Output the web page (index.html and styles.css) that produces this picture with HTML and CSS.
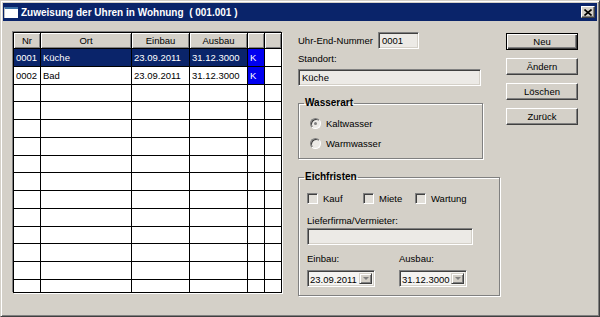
FILE: index.html
```html
<!DOCTYPE html>
<html>
<head>
    <meta charset="utf-8">
    <title>Zuweisung der Uhren in Wohnung</title>
    <link rel="stylesheet" href="styles.css">
</head>
<body>
    <div class="window">
        <div class="titlebar">
            <span class="app-icon"></span>
            <span class="title">Zuweisung der Uhren in Wohnung&nbsp; ( 001.001 )</span>
            <span class="close-btn">
                <svg width="8" height="7" viewBox="0 0 8 7"><path d="M0.5 0.5 L7.5 6.5 M7.5 0.5 L0.5 6.5" stroke="#000" stroke-width="1.6"/></svg>
            </span>
        </div>

        <div class="dialog">
            <!-- Uhren list -->
            <div class="grid-frame">
                <table class="grid">
                    <thead>
                        <tr>
                            <th class="c-nr">Nr</th>
                            <th class="c-ort">Ort</th>
                            <th class="c-date">Einbau</th>
                            <th class="c-date">Ausbau</th>
                            <th class="c-flag"></th>
                            <th class="c-end"></th>
                        </tr>
                    </thead>
                    <tbody>
                        <tr class="selected">
                            <td>0001</td><td>Küche</td><td>23.09.2011</td><td>31.12.3000</td><td class="flag">K</td><td class="blank"></td>
                        </tr>
                        <tr>
                            <td>0002</td><td>Bad</td><td>23.09.2011</td><td>31.12.3000</td><td class="flag">K</td><td class="blank"></td>
                        </tr>
                        <tr><td></td><td></td><td></td><td></td><td></td><td></td></tr>
                        <tr><td></td><td></td><td></td><td></td><td></td><td></td></tr>
                        <tr><td></td><td></td><td></td><td></td><td></td><td></td></tr>
                        <tr><td></td><td></td><td></td><td></td><td></td><td></td></tr>
                        <tr><td></td><td></td><td></td><td></td><td></td><td></td></tr>
                        <tr><td></td><td></td><td></td><td></td><td></td><td></td></tr>
                        <tr><td></td><td></td><td></td><td></td><td></td><td></td></tr>
                        <tr><td></td><td></td><td></td><td></td><td></td><td></td></tr>
                        <tr><td></td><td></td><td></td><td></td><td></td><td></td></tr>
                        <tr><td></td><td></td><td></td><td></td><td></td><td></td></tr>
                        <tr><td></td><td></td><td></td><td></td><td></td><td></td></tr>
                        <tr><td></td><td></td><td></td><td></td><td></td><td></td></tr>
                    </tbody>
                </table>
            </div>

            <!-- Details -->
            <div class="form">
                <div class="field-row">
                    <span class="label-wide">Uhr-End-Nummer</span>
                    <div class="edit edit-nr">0001</div>
                </div>
                <div class="label standort-label">Standort:</div>
                <div class="edit edit-standort">Küche</div>

                <fieldset class="group group-wasser">
                    <legend>Wasserart</legend>
                    <div class="option">
                        <span class="radio checked"></span>
                        <span>Kaltwasser</span>
                    </div>
                    <div class="option">
                        <span class="radio"></span>
                        <span>Warmwasser</span>
                    </div>
                </fieldset>

                <fieldset class="group group-eich">
                    <legend>Eichfristen</legend>
                    <div class="checks">
                        <div class="option check-kauf"><span class="checkbox"></span><span>Kauf</span></div>
                        <div class="option check-miete"><span class="checkbox"></span><span>Miete</span></div>
                        <div class="option"><span class="checkbox"></span><span>Wartung</span></div>
                    </div>
                    <div class="label liefer-label">Lieferfirma/Vermieter:</div>
                    <div class="edit edit-liefer"></div>
                    <div class="dates">
                        <div class="date-col">
                            <div class="label">Einbau:</div>
                            <div class="combo"><span class="combo-text">23.09.2011</span><span class="combo-btn"><span class="arrow"></span></span></div>
                        </div>
                        <div class="date-col">
                            <div class="label">Ausbau:</div>
                            <div class="combo"><span class="combo-text">31.12.3000</span><span class="combo-btn"><span class="arrow"></span></span></div>
                        </div>
                    </div>
                </fieldset>
            </div>

            <!-- Actions -->
            <div class="actions">
                <button class="btn default">Neu</button>
                <button class="btn">Ändern</button>
                <button class="btn">Löschen</button>
                <button class="btn">Zurück</button>
            </div>
        </div>
    </div>
</body>
</html>
```

FILE: styles.css
```css
body {
    margin: 0;
    background-color: #d4d0c8;
    font-family: "Liberation Sans", Arial, sans-serif;
    font-size: 9.5px;
    color: #000;
}
.window {
    width: 600px;
    height: 317px;
    box-sizing: border-box;
    border: 1px solid;
    border-color: #d4d0c8 #404040 #404040 #d4d0c8;
    box-shadow: inset 1px 1px #fff, inset -1px -1px #808080;
    padding: 2px;
    background-color: #d4d0c8;
}
.titlebar {
    height: 18px;
    background-color: #0a246a;
    display: flex;
    align-items: center;
    padding: 0 2px 0 1px;
    color: #fff;
}
.app-icon {
    width: 14px;
    height: 11px;
    box-sizing: border-box;
    background-color: #fff;
    border-top: 2px solid #3a6ea5;
    border-left: 1px solid #c0c0c0;
}
.title {
    margin-left: 3px;
    font-weight: bold;
    font-size: 10px;
    flex: 1;
    white-space: pre;
}
.close-btn {
    width: 14px;
    height: 12px;
    box-sizing: border-box;
    background-color: #d4d0c8;
    border: 1px solid;
    border-color: #fff #404040 #404040 #fff;
    box-shadow: inset -1px -1px #808080;
    display: flex;
    align-items: center;
    justify-content: center;
}
.dialog {
    display: flex;
    align-items: flex-start;
    padding: 11px 0 0 10px;
}

/* list */
.grid-frame {
    width: 269px;
    height: 261px;
    box-sizing: border-box;
    border: 1px solid #000;
    box-shadow: -1px -1px 0 #808080, 1px 1px 0 #fff;
    overflow: hidden;
    background-color: #fff;
}
.grid {
    border-collapse: separate;
    border-spacing: 0;
    table-layout: fixed;
    width: 267px;
}
.grid th,
.grid td {
    box-sizing: border-box;
    border-right: 1px solid #000;
    border-bottom: 1px solid #000;
    padding: 0 2px;
    white-space: nowrap;
    overflow: hidden;
    font-weight: normal;
}
.grid th:last-child,
.grid td:last-child {
    border-right: 0;
}
.grid th {
    height: 16px;
    background-color: #d4d0c8;
    box-shadow: inset 1px 1px #fff, inset -1px -1px #808080;
    text-align: center;
}
.grid td {
    height: 17.77px;
}
.c-nr { width: 27px; }
.c-ort { width: 91px; }
.c-date { width: 58px; }
.c-flag { width: 17px; }
.c-end { width: 16px; }
.grid tr.selected td {
    background-color: #0a246a;
    color: #fff;
}
.grid td.flag,
.grid tr.selected td.flag {
    background-color: #0000f0;
    color: #fff;
}
.grid tr.selected td.blank {
    background-color: #fff;
}

/* details */
.form {
    width: 186px;
    margin-left: 16px;
    display: flex;
    flex-direction: column;
}
.field-row {
    display: flex;
    align-items: center;
    height: 17px;
}
.label-wide {
    width: 80px;
}
.label {
    height: 12px;
    line-height: 12px;
}
.standort-label {
    margin-top: 4px;
}
.edit {
    height: 17px;
    box-sizing: border-box;
    border: 1px solid;
    border-color: #808080 #fff #fff #808080;
    box-shadow: inset 1px 1px #404040, inset -1px -1px #d4d0c8;
    background-color: #eceae6;
    padding: 0 3px;
    line-height: 15px;
}
.edit-nr {
    width: 41px;
}
.edit-standort {
    width: 183px;
    margin-top: 4px;
}
.group {
    margin: 0;
    border: 1px solid #808080;
    box-shadow: 1px 1px #fff, inset 1px 1px #fff;
}
.group legend {
    font-weight: bold;
    font-size: 10px;
    padding: 0 1px;
    line-height: 12px;
}
.group-wasser {
    margin-top: 11px;
    width: 185px;
    box-sizing: border-box;
    padding: 7px 11px 8px;
}
.group-wasser legend {
    margin-left: -6px;
}
.group-wasser .option + .option {
    margin-top: 6px;
}
.group-eich {
    margin-top: 12px;
    width: 186px;
    box-sizing: border-box;
    padding: 8px 8px 8px;
}
.group-eich legend {
    margin-left: -3px;
}
.option {
    display: flex;
    align-items: center;
    height: 14px;
}
.radio {
    width: 11px;
    height: 11px;
    box-sizing: border-box;
    border-radius: 50%;
    border: 1px solid;
    border-color: #808080 #fff #fff #808080;
    box-shadow: inset 1px 1px #404040;
    background-color: #eceae6;
    margin-right: 5px;
    display: flex;
    align-items: center;
    justify-content: center;
}
.radio.checked::after {
    content: "";
    width: 3px;
    height: 3px;
    border-radius: 50%;
    background-color: #808080;
}
.checks {
    display: flex;
}
.check-kauf {
    width: 56px;
}
.check-miete {
    width: 52px;
}
.checkbox {
    width: 11px;
    height: 11px;
    box-sizing: border-box;
    border: 1px solid;
    border-color: #808080 #fff #fff #808080;
    box-shadow: inset 1px 1px #404040;
    background-color: #e2dfd9;
    margin-right: 5px;
}
.liefer-label {
    margin-top: 10px;
}
.edit-liefer {
    width: 166px;
    margin-top: 1px;
}
.dates {
    display: flex;
    margin-top: 8px;
}
.date-col {
    width: 92px;
}
.combo {
    margin-top: 5px;
    width: 68px;
    height: 17px;
    box-sizing: border-box;
    border: 1px solid;
    border-color: #808080 #fff #fff #808080;
    box-shadow: inset 1px 1px #404040, inset -1px -1px #d4d0c8;
    background-color: #f4f3f1;
    display: flex;
    padding: 2px;
}
.combo-text {
    flex: 1;
    line-height: 13px;
}
.combo-btn {
    width: 13px;
    box-sizing: border-box;
    background-color: #d4d0c8;
    border: 1px solid;
    border-color: #d4d0c8 #404040 #404040 #d4d0c8;
    box-shadow: inset 1px 1px #fff, inset -1px -1px #808080;
    display: flex;
    align-items: center;
    justify-content: center;
}
.arrow {
    width: 0;
    height: 0;
    border-left: 3px solid transparent;
    border-right: 3px solid transparent;
    border-top: 3px solid #808080;
}

/* buttons */
.actions {
    display: flex;
    flex-direction: column;
    margin: 1px 0 0 22px;
}
.btn {
    width: 72px;
    height: 17px;
    padding: 0;
    margin-bottom: 8px;
    font-family: "Liberation Sans", Arial, sans-serif;
    font-size: 9.5px;
    color: #000;
    background-color: #d4d0c8;
    border: 1px solid;
    border-color: #fff #404040 #404040 #fff;
    box-shadow: inset -1px -1px #808080;
}
.btn.default {
    border-color: #000;
    box-shadow: inset 1px 1px #fff, inset -1px -1px #404040, inset -2px -2px #808080;
}
```
